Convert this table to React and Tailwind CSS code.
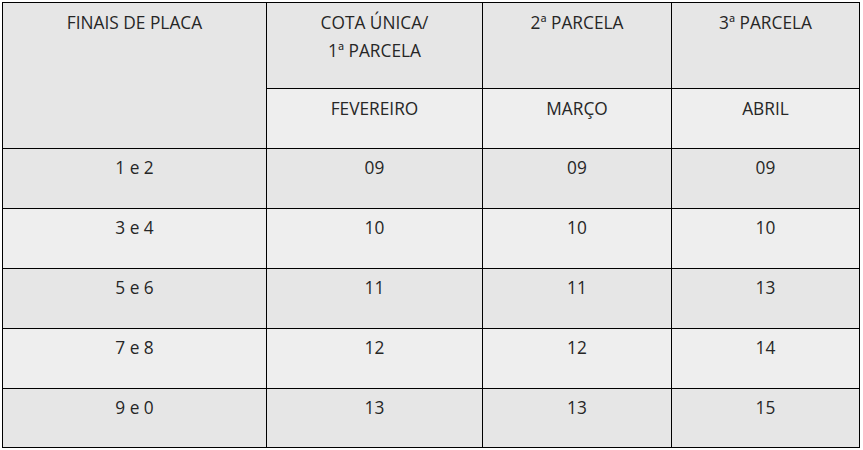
const ROWS = [
  ['1 e 2', '09', '09', '09'],
  ['3 e 4', '10', '10', '10'],
  ['5 e 6', '11', '11', '13'],
  ['7 e 8', '12', '12', '14'],
  ['9 e 0', '13', '13', '15'],
];

function Cell({ children, className = '' }) {
  return (
    <div className={`text-center text-[17.3px] leading-[28px] text-[#262626] ${className}`}>
      {children}
    </div>
  );
}

export default function App() {
  return (
    <div className="min-h-screen bg-white pt-[2px] pl-[2px]" style={{ fontFamily: '"Open Sans", sans-serif' }}>
      <div className="grid w-[858px] grid-cols-[263px_215px_188px_187px] grid-rows-[85px_59px_59px_59px_59px_59px_58px] gap-px border border-black bg-black">
        {/* header */}
        <Cell className="row-span-2 bg-[#e6e6e6] pt-[6px]">FINAIS DE PLACA</Cell>
        <Cell className="bg-[#e6e6e6] pt-[6px]">
          COTA ÚNICA/
          <br />
          1ª PARCELA
        </Cell>
        <Cell className="bg-[#e6e6e6] pt-[6px]">2ª PARCELA</Cell>
        <Cell className="bg-[#e6e6e6] pt-[6px]">3ª PARCELA</Cell>
        <Cell className="bg-[#eeeeee] pt-[6px]">FEVEREIRO</Cell>
        <Cell className="bg-[#eeeeee] pt-[6px]">MARÇO</Cell>
        <Cell className="bg-[#eeeeee] pt-[6px]">ABRIL</Cell>

        {/* data */}
        {ROWS.map((row, i) =>
          row.map((v, j) => (
            <Cell
              key={`${i}-${j}`}
              className={`pt-[5px] ${i % 2 === 0 ? 'bg-[#e6e6e6]' : 'bg-[#eeeeee]'}`}
            >
              {v}
            </Cell>
          ))
        )}
      </div>
    </div>
  );
}
